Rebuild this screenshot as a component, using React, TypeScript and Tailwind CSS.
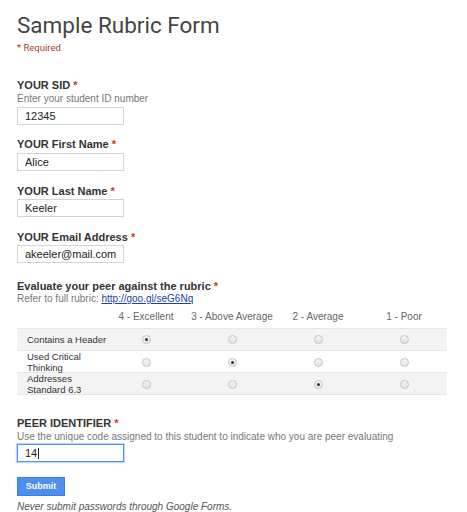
const labelFont = { fontFamily: '"Liberation Sans", Arial, sans-serif' };

type Row = { label: string; checked: number };

const columns = ["4 - Excellent", "3 - Above Average", "2 - Average", "1 - Poor"];
const rows: Row[] = [
  { label: "Contains a Header", checked: 0 },
  { label: "Used Critical Thinking", checked: 1 },
  { label: "Addresses Standard 6.3", checked: 2 },
];

function Radio({ on }: { on: boolean }) {
  return (
    <div className="w-[9px] h-[9px] rounded-full border border-[#c4c4c4] bg-gradient-to-b from-[#f4f4f4] to-[#e4e4e4] flex items-center justify-center mx-auto">
      {on && <div className="w-[3px] h-[3px] rounded-full bg-[#333]" />}
    </div>
  );
}

function Label({ text }: { text: string }) {
  return (
    <div className="text-[11px] leading-[14px] font-bold text-[#333]">
      {text} <span className="text-[#c43b1d]">*</span>
    </div>
  );
}

function TextBox({ value, focus }: { value: string; focus?: boolean }) {
  return (
    <div
      className={
        "w-[107px] h-[18px] flex items-center pl-[7px] text-[11px] text-[#222] bg-white " +
        (focus ? "border border-[#4d90fe] shadow-[0_0_1px_1px_rgba(77,144,254,0.35)]" : "border border-[#d3d3d3]")
      }
    >
      {value}
      {focus && <span className="w-px h-[11px] bg-[#222] ml-px" />}
    </div>
  );
}

export default function App() {
  return (
    <div className="w-[467px] h-[512px] bg-white overflow-hidden px-[17px]" style={labelFont}>
      <h1 className="pt-[9px] text-[22.5px] leading-[32px] text-[#444]" style={{ fontFamily: "Roboto, sans-serif" }}>
        Sample Rubric Form
      </h1>
      <div className="text-[9.5px] leading-[14px] text-[#a54234]" style={{ fontFamily: "Roboto, sans-serif" }}>
        * Required
      </div>

      <div className="mt-[23px]">
        <Label text="YOUR SID" />
        <div className="text-[10px] leading-[14px] text-[#777]">Enter your student ID number</div>
        <div className="mt-px">
          <TextBox value="12345" />
        </div>
      </div>

      <div className="mt-[12px]">
        <Label text="YOUR First Name" />
        <div className="mt-[2px]">
          <TextBox value="Alice" />
        </div>
      </div>

      <div className="mt-[13px]">
        <Label text="YOUR Last Name" />
        <div className="mt-[1px]">
          <TextBox value="Keeler" />
        </div>
      </div>

      <div className="mt-[13px]">
        <Label text="YOUR Email Address" />
        <div className="mt-[1px]">
          <TextBox value="akeeler@mail.com" />
        </div>
      </div>

      <div className="mt-[16px]">
        <Label text="Evaluate your peer against the rubric" />
        <div className="text-[10px] leading-[12px] text-[#777]">
          Refer to full rubric:{" "}
          <span className="text-[#1a3fa8] underline">http://goo.gl/seG6Nq</span>
        </div>
        <div className="w-[430px]">
          <div className="grid grid-cols-5 h-[23px] items-center text-[10px] text-[#666] text-center">
            <div />
            {columns.map((c) => (
              <div key={c}>{c}</div>
            ))}
          </div>
          <div className="border-t border-[#e6e6e6]">
            {rows.map((r, i) => (
              <div
                key={r.label}
                className={
                  "grid grid-cols-5 h-[22px] items-center border-b border-[#e6e6e6] " +
                  (i % 2 === 0 ? "bg-[#f3f3f3]" : "bg-white")
                }
              >
                <div className="pl-[10px]">
                  <div className="w-[82px] text-[9.5px] leading-[11px] text-[#333]">{r.label}</div>
                </div>
                {columns.map((c, j) => (
                  <div key={c}>
                    <Radio on={j === r.checked} />
                  </div>
                ))}
              </div>
            ))}
          </div>
        </div>
      </div>

      <div className="mt-[21px]">
        <Label text="PEER IDENTIFIER" />
        <div className="text-[10px] leading-[13px] text-[#777]">
          Use the unique code assigned to this student to indicate who you are peer evaluating
        </div>
        <div className="mt-px">
          <TextBox value="14" focus />
        </div>
      </div>

      <button className="mt-[15px] w-[48px] h-[19px] bg-[#4d8ef0] border border-[#3b7ee6] text-white text-[9px] font-bold">
        Submit
      </button>
      <div className="mt-[5px] text-[10px] leading-[12px] italic text-[#555]">
        Never submit passwords through Google Forms.
      </div>
    </div>
  );
}
